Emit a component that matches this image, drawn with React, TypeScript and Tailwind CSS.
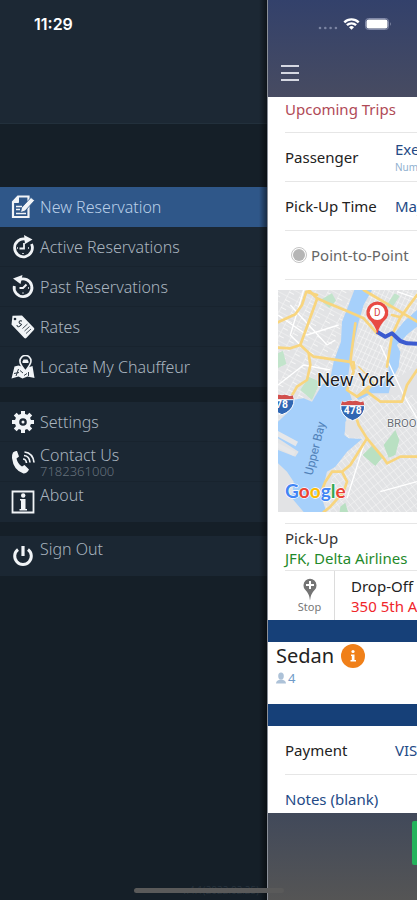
import type { ReactNode } from "react";
import clsx from "clsx";

function NewReservationIcon() {
  return (
    <svg viewBox="0 0 24 24" className="h-6 w-6" fill="none" stroke="currentColor">
      <path d="M7 1.500H17.500V22H2V7z" fill="#2f5789" strokeWidth="2.200" />
      <path d="M2 7.500h5.500V1.500z" fill="currentColor" />
      <path d="M5 11.500h6M5 14.500h4M5 18.500h10" strokeWidth="1.400" />
      <path d="M9.500 17.500l1.200-5 9.300-10 3.500 3-9.500 10.500z" fill="currentColor" stroke="#2f5789" strokeWidth=".8" />
    </svg>
  );
}

function ActiveIcon() {
  return (
    <svg viewBox="0 0 24 24" className="h-6 w-6" fill="none" stroke="currentColor">
      <path d="M14.500 4.200A8.900 8.900 0 1 0 20.500 9" strokeWidth="2.800" />
      <path d="M13 0l8.500 4.500L14 9z" fill="currentColor" stroke="none" />
      <path d="M13 8v5.500H8.500" strokeWidth="1.800" />
      <path d="M6 13h1M17 13h1M12 18v1" strokeWidth="1.500" />
    </svg>
  );
}

function PastIcon() {
  return (
    <svg viewBox="0 0 24 24" className="h-6 w-6" fill="none" stroke="currentColor">
      <path d="M8 4.800A8.900 8.900 0 1 1 3.300 11" strokeWidth="2.800" />
      <path d="M11.500 0L2 3.500 9.500 9z" fill="currentColor" stroke="none" />
      <path d="M15.500 9.500L12 13H8.500" strokeWidth="2" />
      <path d="M17 13h1M12 17.500v1" strokeWidth="1.500" />
    </svg>
  );
}

function RatesIcon() {
  return (
    <svg viewBox="0 0 24 24" className="h-6 w-6" fill="none">
      <path d="M1.500 0.800 11 .5l12 12.500q.8 1-.2 2l-7.500 8q-1 .8-2 0L.5 9.500z" fill="currentColor" />
      <circle cx="4" cy="4" r="1.300" fill="#1b2733" />
      <path d="M11 6q-3-1-3 1t2 2-1 2-3-1" stroke="#1b2733" />
      <path d="M11.500 13.500l5-4.500M13.500 16l5-4.500M15 18.500l5-4.500" stroke="#1b2733" strokeWidth=".8" />
    </svg>
  );
}

function LocateIcon() {
  return (
    <svg viewBox="0 0 24 24" className="h-6 w-6" fill="none" stroke="currentColor">
      <path d="M3.500 11.500l4-1 8 2.500 6-2 2 12-7-1.500-5 2-4-2-7 2z" fill="currentColor" stroke="none" />
      <path d="M7.500 14l-2.500 7M17.500 17v4M9 15.500l3 2.500M3 18.500l5-1M13 20.500l3-2" stroke="#1b2733" strokeWidth=".9" />
      <path d="M14.500 16Q8.500 9 9 6a5.500 5.500 0 0 1 11 0q0 3-5.500 10z" fill="#1b2733" strokeWidth="1.600" />
      <path d="M11.500 8h6V6.500l-1-2h-4l-1 2z" fill="currentColor" stroke="none" />
    </svg>
  );
}

function SettingsIcon() {
  return (
    <svg viewBox="0 0 24 24" className="h-6 w-6" stroke="currentColor" fill="none">
      <circle cx="12" cy="12" r="6" strokeWidth="4.400" />
      <path
        d="M12 1v4M12 19v4M1 12h4M19 12h4M4.200 4.200 7 7M17 17l2.800 2.800M4.200 19.800 7 17M17 7l2.800-2.800"
        strokeWidth="4"
      />
      <circle cx="12" cy="12" r="1.500" fill="currentColor" stroke="none" />
    </svg>
  );
}

function ContactIcon() {
  return (
    <svg viewBox="0 0 24 24" className="h-6 w-6" fill="none" stroke="currentColor">
      <path
        d="M2 2.500Q4 .5 6 1l2 5.500-2.500 2q1 5 5.500 8l2.500-1.500 4.500 4.500q-2 4-5.500 4Q2.500 20.500 1 8q0-4 1-5.500z"
        fill="currentColor"
        stroke="none"
      />
      <path d="M12 9q3 0 3.500 4M13 5.500q5.500.5 6 7M13.500 2q8.500 1 9.500 10.500" strokeWidth="1.700" />
    </svg>
  );
}

function AboutIcon() {
  return (
    <svg viewBox="0 0 24 24" className="h-6 w-6" fill="none" stroke="currentColor">
      <path d="M1.500 1.500h21v21h-21z" strokeWidth="1.800" />
      <path d="M9 9h5.500v10H16v1.500H8.500V19H10v-8.500H9z" fill="currentColor" stroke="none" />
      <circle cx="12.200" cy="5.500" r="2.200" fill="currentColor" stroke="none" />
    </svg>
  );
}

function PowerIcon() {
  return (
    <svg viewBox="0 0 24 24" className="h-6 w-6" fill="none" stroke="currentColor" strokeWidth="3">
      <path d="M7 5.500a8.300 8.300 0 1 0 10 0" />
      <path d="M12 2v10" strokeWidth="3.200" />
    </svg>
  );
}

type ItemProps = {
  icon: ReactNode;
  label: string;
  detail?: string;
  active?: boolean;
  low?: boolean;
};

function MenuItem({ icon, label, detail, active, low }: ItemProps) {
  return (
    <li className="h-10 border-b border-[#18232e] last:border-b-0">
      <a
        href="#"
        aria-current={active ? "page" : undefined}
        className={clsx(
          "flex h-10 gap-[5px] pl-[11px]",
          low ? "items-start pt-1" : "items-center",
          active ? "bg-[#2f5789] text-[#b9cfe8]" : "text-[#a9b4bf]"
        )}
      >
        <span className={clsx("text-[#f1f4f7]", low && "pt-1")}>{icon}</span>
        <span className="flex flex-col">
          <span className="leading-[18px]">{label}</span>
          {detail && <span className="text-[13px] leading-[14px] text-[#66717c]">{detail}</span>}
        </span>
      </a>
    </li>
  );
}

function Sidebar() {
  return (
    <nav className="relative flex w-[267px] shrink-0 flex-col bg-[#151f28] text-base font-light">
      <div className="h-[124px] border-b border-[#22303c] bg-[#1c2834] pt-[14px] pl-[34px] font-['Inter'] text-[16px] leading-5 font-semibold text-white">
        11:29
      </div>
      <div className="h-[63px]" />
      <ul className="bg-[#1b2733]">
        <MenuItem icon={<NewReservationIcon />} label="New Reservation" active />
        <MenuItem icon={<ActiveIcon />} label="Active Reservations" />
        <MenuItem icon={<PastIcon />} label="Past Reservations" />
        <MenuItem icon={<RatesIcon />} label="Rates" />
        <MenuItem icon={<LocateIcon />} label="Locate My Chauffeur" />
      </ul>
      <ul className="mt-[15px] bg-[#1b2733]">
        <MenuItem icon={<SettingsIcon />} label="Settings" />
        <MenuItem icon={<ContactIcon />} label="Contact Us" detail="7182361000" />
        <MenuItem icon={<AboutIcon />} label="About" low />
      </ul>
      <ul className="mt-[14px] bg-[#1b2733]">
        <MenuItem icon={<PowerIcon />} label="Sign Out" low />
      </ul>
      <p className="mt-auto pr-2 pb-1 text-right text-[10px] leading-3 text-[#2c3741]">v.4.1(2022.02.25)</p>
      <div className="absolute inset-y-0 right-0 w-2 bg-linear-to-r from-transparent to-black/50" />
    </nav>
  );
}

function StatusIcons() {
  return (
    <div className="flex items-center gap-[5px] pl-[50px]">
      <svg viewBox="0 0 20 12" className="h-3 w-5" fill="#7b84a2">
        <circle cx="2" cy="10" r="1.300" />
        <circle cx="7.300" cy="10" r="1.300" />
        <circle cx="12.600" cy="10" r="1.300" />
        <circle cx="17.900" cy="10" r="1.300" />
      </svg>
      <svg viewBox="0 0 16 12" className="h-3 w-[17px]" fill="none" stroke="#fff" strokeWidth="2.400">
        <path d="M.8 4.300a10.300 10.300 0 0 1 14.400 0" />
        <path d="M3.400 7.200a6.600 6.600 0 0 1 9.200 0" />
        <path d="M8 11.800 5.500 9.200a3.600 3.600 0 0 1 5 0z" fill="#fff" stroke="none" />
      </svg>
      <svg viewBox="0 0 27 12" className="h-3 w-[27px]" fill="none">
        <rect x=".5" y=".5" width="23" height="11" rx="3" stroke="#8189a8" />
        <rect x="1.500" y="1.500" width="21" height="9" rx="2" fill="#fff" />
        <path d="M25 4q1.500 2 0 4z" fill="#9aa1bb" />
      </svg>
    </div>
  );
}

function Shield({ x, y, label }: { x: number; y: number; label: string }) {
  return (
    <g transform={`translate(${x} ${y})`}>
      <path d="M-32-24q8 5 16 0 8-4 16 0 8-4 16 0 8 5 16 0 6 12 3 24-6 24-35 34-29-10-35-34-3-12 3-24z" fill="#2f66b3" stroke="#fff" strokeWidth="3" />
      <path d="M-32-24q8 5 16 0 8-4 16 0 8-4 16 0 8 5 16 0l3 12h-70z" fill="#d2504d" />
      <path d="M-35-11h70" stroke="#fff" strokeWidth="3" />
      <text y="15" textAnchor="middle" fontFamily="Roboto" fontWeight="700" fontSize="31" fill="#fff">
        {label}
      </text>
    </g>
  );
}

function RouteMap() {
  return (
    <svg viewBox="33 15 417 666" preserveAspectRatio="xMinYMin slice" className="block h-[222px] w-full" role="img" aria-label="Route map">
      <defs>
        <pattern id="streetsWest" width="34" height="26" patternUnits="userSpaceOnUse" patternTransform="rotate(28)">
          <path d="M0 0H34M0 0V26M0 13H17" stroke="#f6f6f6" strokeWidth="3" fill="none" />
        </pattern>
        <pattern id="streetsCity" width="13" height="20" patternUnits="userSpaceOnUse" patternTransform="rotate(25)">
          <path d="M0 0H13M0 0V20" stroke="#fafafa" strokeWidth="3" fill="none" />
        </pattern>
        <pattern id="streetsBrooklyn" width="15" height="24" patternUnits="userSpaceOnUse" patternTransform="rotate(-38)">
          <path d="M0 0H15M0 0V24" stroke="#f7f7f7" strokeWidth="3" fill="none" />
        </pattern>
      </defs>
      <path d="M0 0H450V690H0z" fill="#e2e3e5" />
      <path d="M0 0H260L200 240 150 320 33 430z" fill="url(#streetsWest)" />
      <path d="M300 0H450V240L330 320 240 320z" fill="url(#streetsCity)" />
      <path d="M250 330H450V690H170z" fill="url(#streetsBrooklyn)" />
      <path d="M160 45l35-20 12 22-20 22zM33 205l15-8 10 40-25 12zM100 315l25-40 35 15-25 55zM355 65l28-40 15 8-25 38z" fill="#c2e4cb" />
      <path d="M287 510l30-30 33 33-25 30zM350 480l35-45 12 30-12 45-20 8zM220 665l15-12 8 28h-25z" fill="#b9e0c2" />

      {/* Hudson, bay and East River */}
      <path
        d="M262 15H315L290 60 275 110 262 170 248 240 240 300 255 345 235 360 238 410 232 450 245 460 285 462 240 500 205 545 180 560 170 600 165 640 178 681H110L75 640 80 590 60 560 33 535V495L85 515 95 500 33 460V410L60 385 75 345 110 340 135 350 165 300 190 280 200 230 222 170 225 110 245 60z"
        fill="#a6d0fb"
      />
      <path d="M33 438l60 32-7 14-53-29zM33 474l52 26-6 12-46-23z" fill="#e6e7e9" />
      <path d="M235 410l20-15 20 20 15 35-20 10-35-15z" fill="#e2e3e5" />
      <path d="M450 75L410 110 375 155 363 200 365 255 350 295 300 310 265 335 275 345 315 325 365 325 375 285 395 245 400 200 390 180 425 145 450 125z" fill="#a6d0fb" />

      <g fill="none" stroke="#fff" strokeWidth="4">
        <path d="M33 90L120 150 215 120M70 60L180 180 205 165M110 15L70 150 130 210M33 300L110 240 190 255M450 40L390 20M340 180L410 330 450 400M340 620L450 590M290 480L240 640" />
      </g>
      <g fill="none" stroke="#f8d57e" strokeWidth="8" strokeLinejoin="round" strokeLinecap="round">
        <path d="M125 15L150 40 180 53 240 78 290 100 330 145" />
        <path d="M33 112L85 88 105 60 118 20 150 30" />
        <path d="M150 42L100 180 125 203 140 215 260 232 262 250" />
        <path d="M33 188L70 190 100 180M125 205L130 240 120 285 90 305 70 340" />
        <path d="M265 115L250 230 260 260 240 315 270 335 305 305" />
        <path d="M290 15L450 110M375 90L400 97 450 30M400 97L375 150 360 245" />
        <path d="M270 335L300 320 340 350 405 350 420 300 450 255" />
        <path d="M265 390L275 420 300 460 350 520 360 535 400 515 450 515" />
        <path d="M300 460L250 540 225 560 195 560 175 590 165 615M225 560L240 590 230 620 190 665 170 681" />
        <path d="M275 245L300 270 320 295 300 320" strokeWidth="4" />
      </g>
      <path d="M330 140L355 155 375 145 400 168 420 175 450 176" fill="none" stroke="#3c5bd0" strokeWidth="12" strokeLinejoin="round" />

      <path d="M331 147Q325 120 303 100A33 33 0 1 1 359 100Q337 120 331 147z" fill="#e84a43" />
      <circle cx="331" cy="82" r="23" fill="#fff" />
      <text x="331" y="93" textAnchor="middle" fontFamily="Roboto" fontSize="30" fill="#d8453f">D</text>

      <Shield x={45} y={355} label="78" />
      <Shield x={257} y={373} label="478" />

      <text x="150" y="303" fontFamily="Roboto" fontSize="55" fill="#202124" stroke="#fff" strokeWidth="4" paintOrder="stroke">New York</text>
      <text x="360" y="426" fontFamily="Roboto" fontSize="34" fill="#666b73" stroke="#fff" strokeWidth="3" paintOrder="stroke">BROOKLYN</text>
      <text transform="translate(136 572) rotate(-76)" fontFamily="Roboto" fontSize="36" fill="#5081b8">Upper Bay</text>
      <text x="54" y="640" fontFamily="Lato" fontWeight="700" fontSize="57" stroke="#fff" strokeWidth="4" paintOrder="stroke">
        <tspan fill="#4285f4">G</tspan>
        <tspan fill="#ea4335">o</tspan>
        <tspan fill="#fbbc05">o</tspan>
        <tspan fill="#4285f4">g</tspan>
        <tspan fill="#34a853">l</tspan>
        <tspan fill="#ea4335">e</tspan>
      </text>
    </svg>
  );
}

function Row({ label, children }: { label: string; children: ReactNode }) {
  return (
    <div className="ml-[17px] flex h-[49px] items-center border-b border-[#e6e6e6]">
      <span className="w-[110px] shrink-0 text-[#222]">{label}</span>
      <span className="text-[#244a86]">{children}</span>
    </div>
  );
}

function Trip() {
  return (
    <main className="flex min-w-0 flex-1 flex-col overflow-hidden border-l border-[#8a8f98] bg-white text-[15px] leading-5 whitespace-nowrap">
      <header className="h-[97px] bg-linear-to-b from-[#33416b] to-[#474b61] pt-[18px]">
        <StatusIcons />
        <button type="button" aria-label="Menu" className="mt-[35px] ml-[13px] flex w-[18px] flex-col gap-[5px]">
          <span className="h-[2px] w-full bg-[#d5d8e2]" />
          <span className="h-[2px] w-full bg-[#d5d8e2]" />
          <span className="h-[2px] w-full bg-[#d5d8e2]" />
        </button>
      </header>

      <h1 className="ml-[17px] h-9 border-b border-[#e6e6e6] pt-[2px] leading-5 text-[#b04a56]">Upcoming Trips</h1>
      <Row label="Passenger">
        <span className="block">Executive</span>
        <span className="block text-[10px] leading-4 text-[#8fb0cf]">Number of passengers</span>
      </Row>
      <Row label="Pick-Up Time">May 12, 2022</Row>
      <label className="ml-[17px] flex h-[49px] items-center gap-1 border-b border-[#e6e6e6] pl-[6px] text-[#666]">
        <input
          type="radio"
          defaultChecked
          className="size-4 shrink-0 appearance-none rounded-full border border-[#c4c4c4] bg-[#b5b5b5] bg-clip-content p-px"
        />
        Point-to-Point
      </label>

      <div className="pt-[10px] pb-[11px] pl-[10px]">
        <RouteMap />
      </div>

      <section className="ml-[17px] h-12 border-y border-[#e6e6e6] pt-1">
        <h2 className="text-[#333]">Pick-Up</h2>
        <p className="text-[#1f8a2b]">JFK, Delta Airlines</p>
      </section>
      <section className="ml-[17px] flex h-[49px]">
        <button type="button" className="flex w-[50px] shrink-0 flex-col items-center border-r border-[#dcdcdc] pt-[7px] text-[#777]">
          <svg viewBox="0 0 14 23" className="h-[23px] w-[14px]">
            <path d="M7 22.500Q6.500 16 2 11.500a6.500 6.500 0 1 1 10 0Q7.500 16 7 22.500z" fill="#747474" />
            <path d="M7 3v8M3 7h8" stroke="#fff" strokeWidth="2" />
          </svg>
          <span className="text-[11px] leading-3">Stop</span>
        </button>
        <div className="pt-[5px] pl-4">
          <h2 className="text-[#222]">Drop-Off</h2>
          <p className="text-[#f0262b]">350 5th Ave, New York</p>
        </div>
      </section>

      <div className="h-[22px] bg-[#164078]" />
      <section className="h-[62px] pl-2">
        <div className="flex items-center gap-[7px]">
          <h2 className="text-xl leading-7 text-[#222]">Sedan</h2>
          <button type="button" aria-label="Vehicle details">
            <svg viewBox="0 0 24 24" className="size-6">
              <circle cx="12" cy="12" r="12" fill="#f08019" />
              <circle cx="12" cy="7.500" r="1.600" fill="#fff" />
              <path d="M10 10.500h3.500V16H15v1.500H9.500V16h1.300v-4H10z" fill="#fff" />
            </svg>
          </button>
        </div>
        <p className="flex items-center gap-[2px] pt-[2px] text-[13px] leading-3 text-[#6f9bc8]">
          <svg viewBox="0 0 10 12" className="h-3 w-[10px]" fill="#adc2d8">
            <ellipse cx="5" cy="4" rx="2.800" ry="3.500" />
            <path d="M0 11.500q0-3 4-4h2q4 1 4 4z" />
          </svg>
          4
        </p>
      </section>
      <div className="h-[22px] bg-[#164078]" />

      <Row label="Payment">VISA</Row>
      <p className="ml-[17px] h-[38px] pt-[14px] text-[#244a86]">Notes (blank)</p>

      <footer className="flex flex-1 items-start justify-end bg-linear-to-b from-[#41495a] to-[#555] pt-2">
        <button type="button" aria-label="Continue" className="h-11 w-[5px] rounded-l-xs bg-[#24b35c]" />
      </footer>
    </main>
  );
}

export default function App() {
  return (
    <div className="relative flex min-h-screen overflow-hidden font-['Noto_Sans','Open_Sans',sans-serif]">
      <Sidebar />
      <Trip />
      <div className="absolute bottom-[7px] left-1/2 h-[5px] w-[150px] -translate-x-1/2 rounded-full bg-[#5a5a5a]" />
    </div>
  );
}
